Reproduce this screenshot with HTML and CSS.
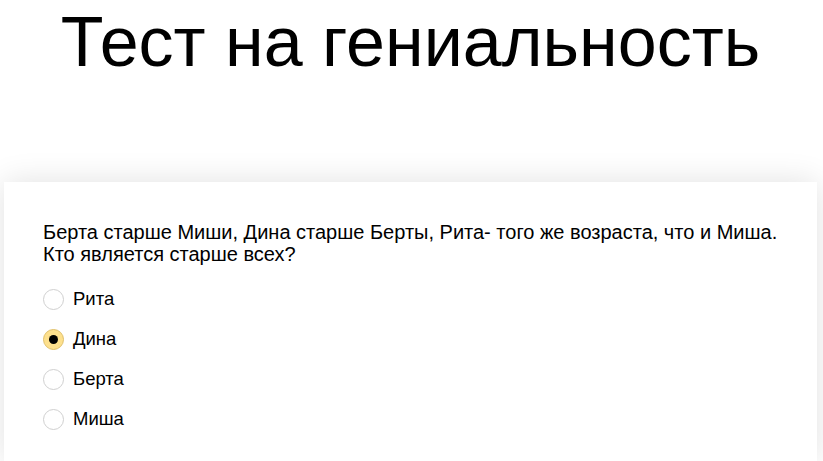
FILE: index.html
```html
<!DOCTYPE html>
<html lang="ru">
<head>
<meta charset="utf-8">
<link rel="stylesheet" href="styles.css">
</head>
<body>
<h1 class="title">Тест на гениальность</h1>
<div class="card">
  <p class="question">Берта старше Миши, Дина старше Берты, Рита- того же возраста, что и Миша.<br>Кто является старше всех?</p>
  <div class="options">
    <label class="option"><span class="radio"></span>Рита</label>
    <label class="option"><span class="radio checked"></span>Дина</label>
    <label class="option"><span class="radio"></span>Берта</label>
    <label class="option"><span class="radio"></span>Миша</label>
  </div>
</div>
</body>
</html>
```
FILE: styles.css
```css
html, body {
  margin: 0;
  padding: 0;
  background: #fff;
  font-family: "Liberation Sans", Arial, sans-serif;
  color: #000;
  overflow: hidden;
}
body {
  height: 461px;
  box-sizing: border-box;
  padding: 0 6px 0 4px;
  display: flex;
  flex-direction: column;
}
.title {
  margin: 0;
  padding-top: 2px;
  text-align: center;
  font-weight: normal;
  font-size: 70px;
  line-height: 80px;
  height: 180px;
  flex: none;
}
.card {
  flex: 1;
  background: #fff;
  box-shadow: 0 0 30px rgba(0, 0, 0, 0.12);
  padding: 39px 39px 0 38px;
}
.question {
  margin: 0 0 14px 1px;
  font-size: 20px;
  line-height: 22px;
}
.options {
  display: flex;
  flex-direction: column;
  margin-left: 1px;
}
.option {
  display: flex;
  align-items: center;
  height: 40px;
  font-size: 18.5px;
  gap: 9px;
}
.radio {
  width: 19px;
  height: 19px;
  border: 1px solid #d0d0d0;
  border-radius: 50%;
  background: #fff;
  display: flex;
  align-items: center;
  justify-content: center;
}
.radio.checked {
  background: #fde08d;
  border-color: #e0c06a;
}
.radio.checked::after {
  content: "";
  width: 9px;
  height: 9px;
  border-radius: 50%;
  background: #000;
}
```
